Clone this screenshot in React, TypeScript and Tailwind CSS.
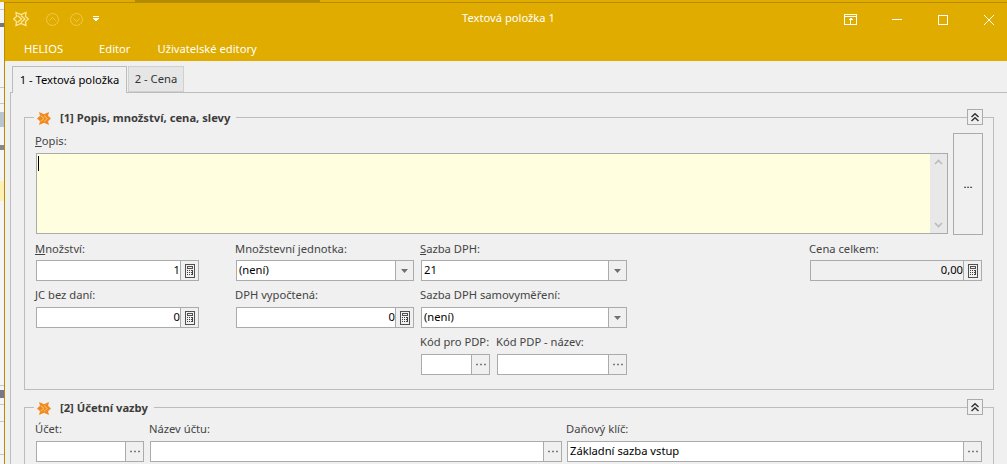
import React from "react";

const Calc = () => (
  <svg width="10" height="14" viewBox="0 0 10 14" shapeRendering="crispEdges">
    <rect x="0.5" y="0.5" width="9" height="13" fill="#f0f0f0" stroke="#505050" />
    <rect x="2.5" y="2.5" width="5" height="2" fill="#f0f0f0" stroke="#505050" />
    {[6, 8, 10].map((y) =>
      [2, 4, 6].map((x) => <rect key={`${x}-${y}`} x={x} y={y} width="1" height="1" fill="#404040" />)
    )}
    <rect x="7" y="6" width="1" height="5" fill="#404040" />
  </svg>
);

const Dots = () => (
  <svg width="10" height="3" viewBox="0 0 10 3">
    <rect x="0.25" y="0.75" width="1.5" height="1.5" fill="#555" />
    <rect x="4.25" y="0.75" width="1.5" height="1.5" fill="#555" />
    <rect x="8.25" y="0.75" width="1.5" height="1.5" fill="#555" />
  </svg>
);

const Arrow = () => (
  <svg width="7" height="4" viewBox="0 0 7 4">
    <path d="M0 0H7L3.5 4Z" fill="#707070" />
  </svg>
);

const Side = ({ kind }: { kind: "calc" | "dots" | "arrow" }) => (
  <div className="w-[18px] h-full border-l border-[#ababab] bg-[#f0f0f0] flex items-center justify-center shrink-0">
    {kind === "calc" ? <Calc /> : kind === "dots" ? <Dots /> : <Arrow />}
  </div>
);

const Field = ({
  value,
  right,
  kind,
  readOnly,
  className,
}: {
  value?: string;
  right?: boolean;
  kind: "calc" | "dots" | "arrow";
  readOnly?: boolean;
  className: string;
}) => (
  <div
    className={`h-[21px] border border-[#ababab] flex items-center text-black ${
      readOnly ? "bg-[#f0f0f0]" : "bg-white"
    } ${className}`}
  >
    <div className={`flex-1 min-w-0 whitespace-nowrap ${right ? "text-right" : "pl-[2px]"}`}>{value}</div>
    <Side kind={kind} />
  </div>
);

const Label = ({ children, className = "" }: { children: React.ReactNode; className?: string }) => (
  <div className={`h-[13px] leading-[13px] -ml-[1px] text-[#444] whitespace-nowrap ${className}`}>{children}</div>
);

const Star = () => (
  <svg width="14" height="13" viewBox="0 0 14 13">
    <path d="M2 0 7 2.2 12 0 11 3.8 14 6.5 11 9.2 12 13 7 10.8 2 13 3 9.2 0 6.5 3 3.8Z" fill="#f08a1d" />
    <path d="M3.6 3.6 7 6.5 3.6 9.4M7 3.6 10.4 6.5 7 9.4" fill="none" stroke="#fbc98c" strokeWidth="0.9" />
  </svg>
);

const Collapse = () => (
  <div className="w-[16px] h-[16px] self-start border border-[#ababab] flex items-center justify-center bg-[#f0f0f0] shrink-0">
    <svg width="8" height="9" viewBox="0 0 8 9" fill="none" stroke="#333" strokeWidth="1.5">
      <path d="M.5 4 4 .8 7.5 4M.5 8 4 4.8 7.5 8" />
    </svg>
  </div>
);

const GroupHead = ({ title }: { title: string }) => (
  <div className="flex items-end h-[17px]">
    <div className="w-[10px] h-[9px] border-t border-l border-[#bcbcbc] shrink-0" />
    <div className="flex items-center self-stretch pl-[3px] pr-[6px] pt-[1px]">
      <Star />
      <span className="ml-[9px] font-bold text-[#3c3c3c] whitespace-nowrap">{title}</span>
    </div>
    <div className="flex-1 h-[9px] border-t border-[#bcbcbc]" />
    <Collapse />
    <div className="w-[11px] h-[9px] border-t border-r border-[#bcbcbc] shrink-0" />
  </div>
);

export default function App() {
  return (
    <div
      className="w-[1007px] h-[464px] overflow-hidden bg-white flex flex-col text-[11.2px]"
      style={{ fontFamily: '"Noto Sans", "Liberation Sans", sans-serif' }}
    >
      <div className="h-[2px] shrink-0 flex bg-[#e0ac00]">
        <div className="w-[135px]" />
        <div className="w-[185px] bg-[#b38a00]" />
      </div>
      <div className="flex-1 min-h-0 flex">
        <div className="w-[4px] shrink-0 bg-[#f5f5f5] flex flex-col">
          <div className="h-[7px]" />
          <div className="h-[1px] bg-[#c8c8c8]" />
          <div className="h-[13px]" />
          <div className="h-[4px] bg-[#777]" />
          <div className="h-[60px]" />
          <div className="h-[1px] bg-[#c8c8c8]" />
          <div className="h-[15px]" />
          <div className="h-[1px] bg-[#c8c8c8]" />
          <div className="h-[8px]" />
          <div className="h-[15px] bg-[#b8c4d0]" />
          <div className="h-[18px]" />
          <div className="h-[5px] bg-[#888]" />
          <div className="h-[31px]" />
          <div className="h-[20px] bg-[#fdf0b0]" />
          <div className="h-[184px]" />
          <div className="h-[1px] bg-[#c8c8c8]" />
          <div className="h-[4px]" />
          <div className="h-[8px] bg-[#778]" />
          <div className="h-[6px]" />
          <div className="h-[1px] bg-[#c8c8c8]" />
          <div className="h-[16px]" />
          <div className="h-[1px] bg-[#c8c8c8]" />
          <div className="h-[32px]" />
          <div className="h-[1px] bg-[#c8c8c8]" />
        </div>
        <div className="flex-1 min-w-0 flex flex-col border-t border-l border-[#b88c00]">
          <div className="h-[58px] shrink-0 bg-[#e0ac00] flex flex-col text-white">
            <div className="h-[32px] flex items-center relative">
              <div className="ml-[8px] w-[16px] h-[16px]">
                <svg width="16" height="16" viewBox="0 0 16 16" fill="none" stroke="#ffe9a0" strokeWidth="1.2">
                  <path d="M3 1.5 8 3.5 13 1.5 12.5 5.5 15.5 8 12.5 10.5 13 14.5 8 12.5 3 14.5 3.5 10.5 .5 8 3.5 5.5Z" />
                  <path d="M4.5 4.5 8.5 8 4.5 11.5M8 4.5 12 8 8 11.5" />
                </svg>
              </div>
              <div className="ml-[17px] flex items-center gap-[11px]">
                <svg width="13" height="13" viewBox="0 0 13 13" fill="none" stroke="#efc84c">
                  <circle cx="6.5" cy="6.5" r="6" />
                  <path d="M3.5 7.5 6.5 4.5 9.5 7.5" />
                </svg>
                <svg width="13" height="13" viewBox="0 0 13 13" fill="none" stroke="#efc84c">
                  <circle cx="6.5" cy="6.5" r="6" />
                  <path d="M3.5 5.5 6.5 8.5 9.5 5.5" />
                </svg>
              </div>
              <svg className="ml-[10px]" width="6" height="6" viewBox="0 0 6 6" shapeRendering="crispEdges">
                <rect x="0" y="0" width="6" height="1" fill="#fff" />
                <path d="M0 2H6L3 5.5Z" fill="#fff" />
              </svg>
              <div className="absolute left-[457px] top-[7px] whitespace-nowrap">Textová položka 1</div>
              <div className="absolute left-[839px] top-[11px] flex items-center">
                <svg width="13" height="11" viewBox="0 0 13 11" fill="none" stroke="#fff" shapeRendering="crispEdges">
                  <rect x="0.5" y="0.5" width="12" height="10" />
                  <path d="M0 2.5H13M6.5 4V11M4.5 5.5H8.5M5.5 4.5H7.5" />
                </svg>
                <div className="ml-[35px] w-[10px] h-[1px] bg-white" />
                <div className="ml-[36px] w-[10px] h-[10px] border border-white" />
                <svg className="ml-[36px]" width="10" height="10" viewBox="0 0 10 10" stroke="#fff" fill="none">
                  <path d="M0 0 10 10M10 0 0 10" />
                </svg>
              </div>
            </div>
            <div className="flex-1 flex items-start pt-[6px] pl-[19px] whitespace-nowrap">
              <span>HELIOS</span>
              <span className="ml-[36px]">Editor</span>
              <span className="ml-[27px]">Uživatelské editory</span>
            </div>
          </div>
          <div className="flex-1 min-h-0 bg-[#f0f0f0] pt-[5px] pl-[5px]">
            <div className="flex items-end h-[27px] pl-[2px] relative z-10">
              <div className="w-[115px] h-[27px] bg-[#f0f0f0] border border-b-0 border-[#bcbcbc] flex items-center justify-center text-black whitespace-nowrap">
                1 - Textová položka
              </div>
              <div className="ml-[1px] w-[56px] h-[26px] mb-[1px] bg-[#e6e6e6] border border-[#d0d0d0] flex items-center justify-center text-[#333] whitespace-nowrap">
                2 - Cena
              </div>
            </div>
            <div className="-mt-[1px] border-t border-l border-[#bcbcbc] pl-[13px] pt-[16px] pr-[13px]">
              <GroupHead title="[1] Popis, množství, cena, slevy" />
              <div className="border-x border-b border-[#bcbcbc] h-[264px] pl-[11px] pr-[10px] pt-[7px] flex flex-col">
                <div className="flex items-start">
                  <div className="w-[912px] shrink-0 pt-[1px]">
                    <Label>
                      <span className="underline">P</span>opis:
                    </Label>
                    <div className="mt-[6px] h-[81px] border border-[#ababab] bg-[#ffffe0] flex">
                      <div className="flex-1 pl-[1px] pt-[2px]">
                        <div className="w-[1px] h-[15px] bg-black" />
                      </div>
                      <div className="w-[17px] bg-[#e8e8e8] flex flex-col items-center justify-between py-[5px]">
                        <svg width="9" height="6" viewBox="0 0 9 6" fill="none" stroke="#bbb" strokeWidth="1.6">
                          <path d="M1 5 4.5 1.5 8 5" />
                        </svg>
                        <svg width="9" height="6" viewBox="0 0 9 6" fill="none" stroke="#bbb" strokeWidth="1.6">
                          <path d="M1 1 4.5 4.5 8 1" />
                        </svg>
                      </div>
                    </div>
                  </div>
                  <div className="ml-[5px] w-[30px] h-[102px] border border-[#ababab] bg-[#f0f0f0] flex items-center justify-center text-black leading-none">
                    ...
                  </div>
                </div>
                <div className="flex mt-[7px]">
                  <div className="w-[200px] shrink-0 flex flex-col">
                    <Label>
                      <span className="underline">M</span>nožství:
                    </Label>
                    <Field value="1" right kind="calc" className="mt-[5px] w-[163px]" />
                    <Label className="mt-[7px]">JC bez daní:</Label>
                    <Field value="0" right kind="calc" className="mt-[6px] w-[163px]" />
                  </div>
                  <div className="w-[185px] shrink-0 flex flex-col">
                    <Label>Množstevní jednotka:</Label>
                    <Field value="(není)" kind="arrow" className="mt-[5px] w-[178px]" />
                    <Label className="mt-[7px]">DPH vypočtená:</Label>
                    <Field value="0" right kind="calc" className="mt-[6px] w-[178px]" />
                  </div>
                  <div className="w-[389px] shrink-0 flex flex-col">
                    <Label>
                      <span className="underline">S</span>azba DPH:
                    </Label>
                    <Field value="21" kind="arrow" className="mt-[5px] w-[206px]" />
                    <Label className="mt-[7px]">Sazba DPH samovyměření:</Label>
                    <Field value="(není)" kind="arrow" className="mt-[6px] w-[206px]" />
                    <div className="mt-[7px] flex w-[206px]">
                      <div className="w-[76px] shrink-0 flex flex-col">
                        <Label>Kód pro PDP:</Label>
                        <Field kind="dots" className="mt-[6px] w-[69px]" />
                      </div>
                      <div className="flex-1 flex flex-col">
                        <Label>Kód PDP - název:</Label>
                        <Field kind="dots" className="mt-[6px]" />
                      </div>
                    </div>
                  </div>
                  <div className="w-[172px] shrink-0 flex flex-col">
                    <Label>Cena celkem:</Label>
                    <Field value="0,00" right readOnly kind="calc" className="mt-[5px]" />
                  </div>
                </div>
              </div>
              <div className="mt-[9px]">
                <GroupHead title="[2] Účetní vazby" />
                <div className="border-x border-[#bcbcbc] h-[60px] pl-[11px] pr-[10px] pt-[6px] flex">
                  <div className="w-[114px] shrink-0 flex flex-col">
                    <Label>Účet:</Label>
                    <Field kind="dots" className="mt-[6px] w-[108px]" />
                  </div>
                  <div className="w-[417px] shrink-0 flex flex-col">
                    <Label>Název účtu:</Label>
                    <Field kind="dots" className="mt-[6px] w-[412px]" />
                  </div>
                  <div className="w-[415px] shrink-0 flex flex-col">
                    <Label>Daňový klíč:</Label>
                    <Field value="Základní sazba vstup" kind="dots" className="mt-[6px]" />
                  </div>
                </div>
              </div>
            </div>
          </div>
        </div>
      </div>
    </div>
  );
}
